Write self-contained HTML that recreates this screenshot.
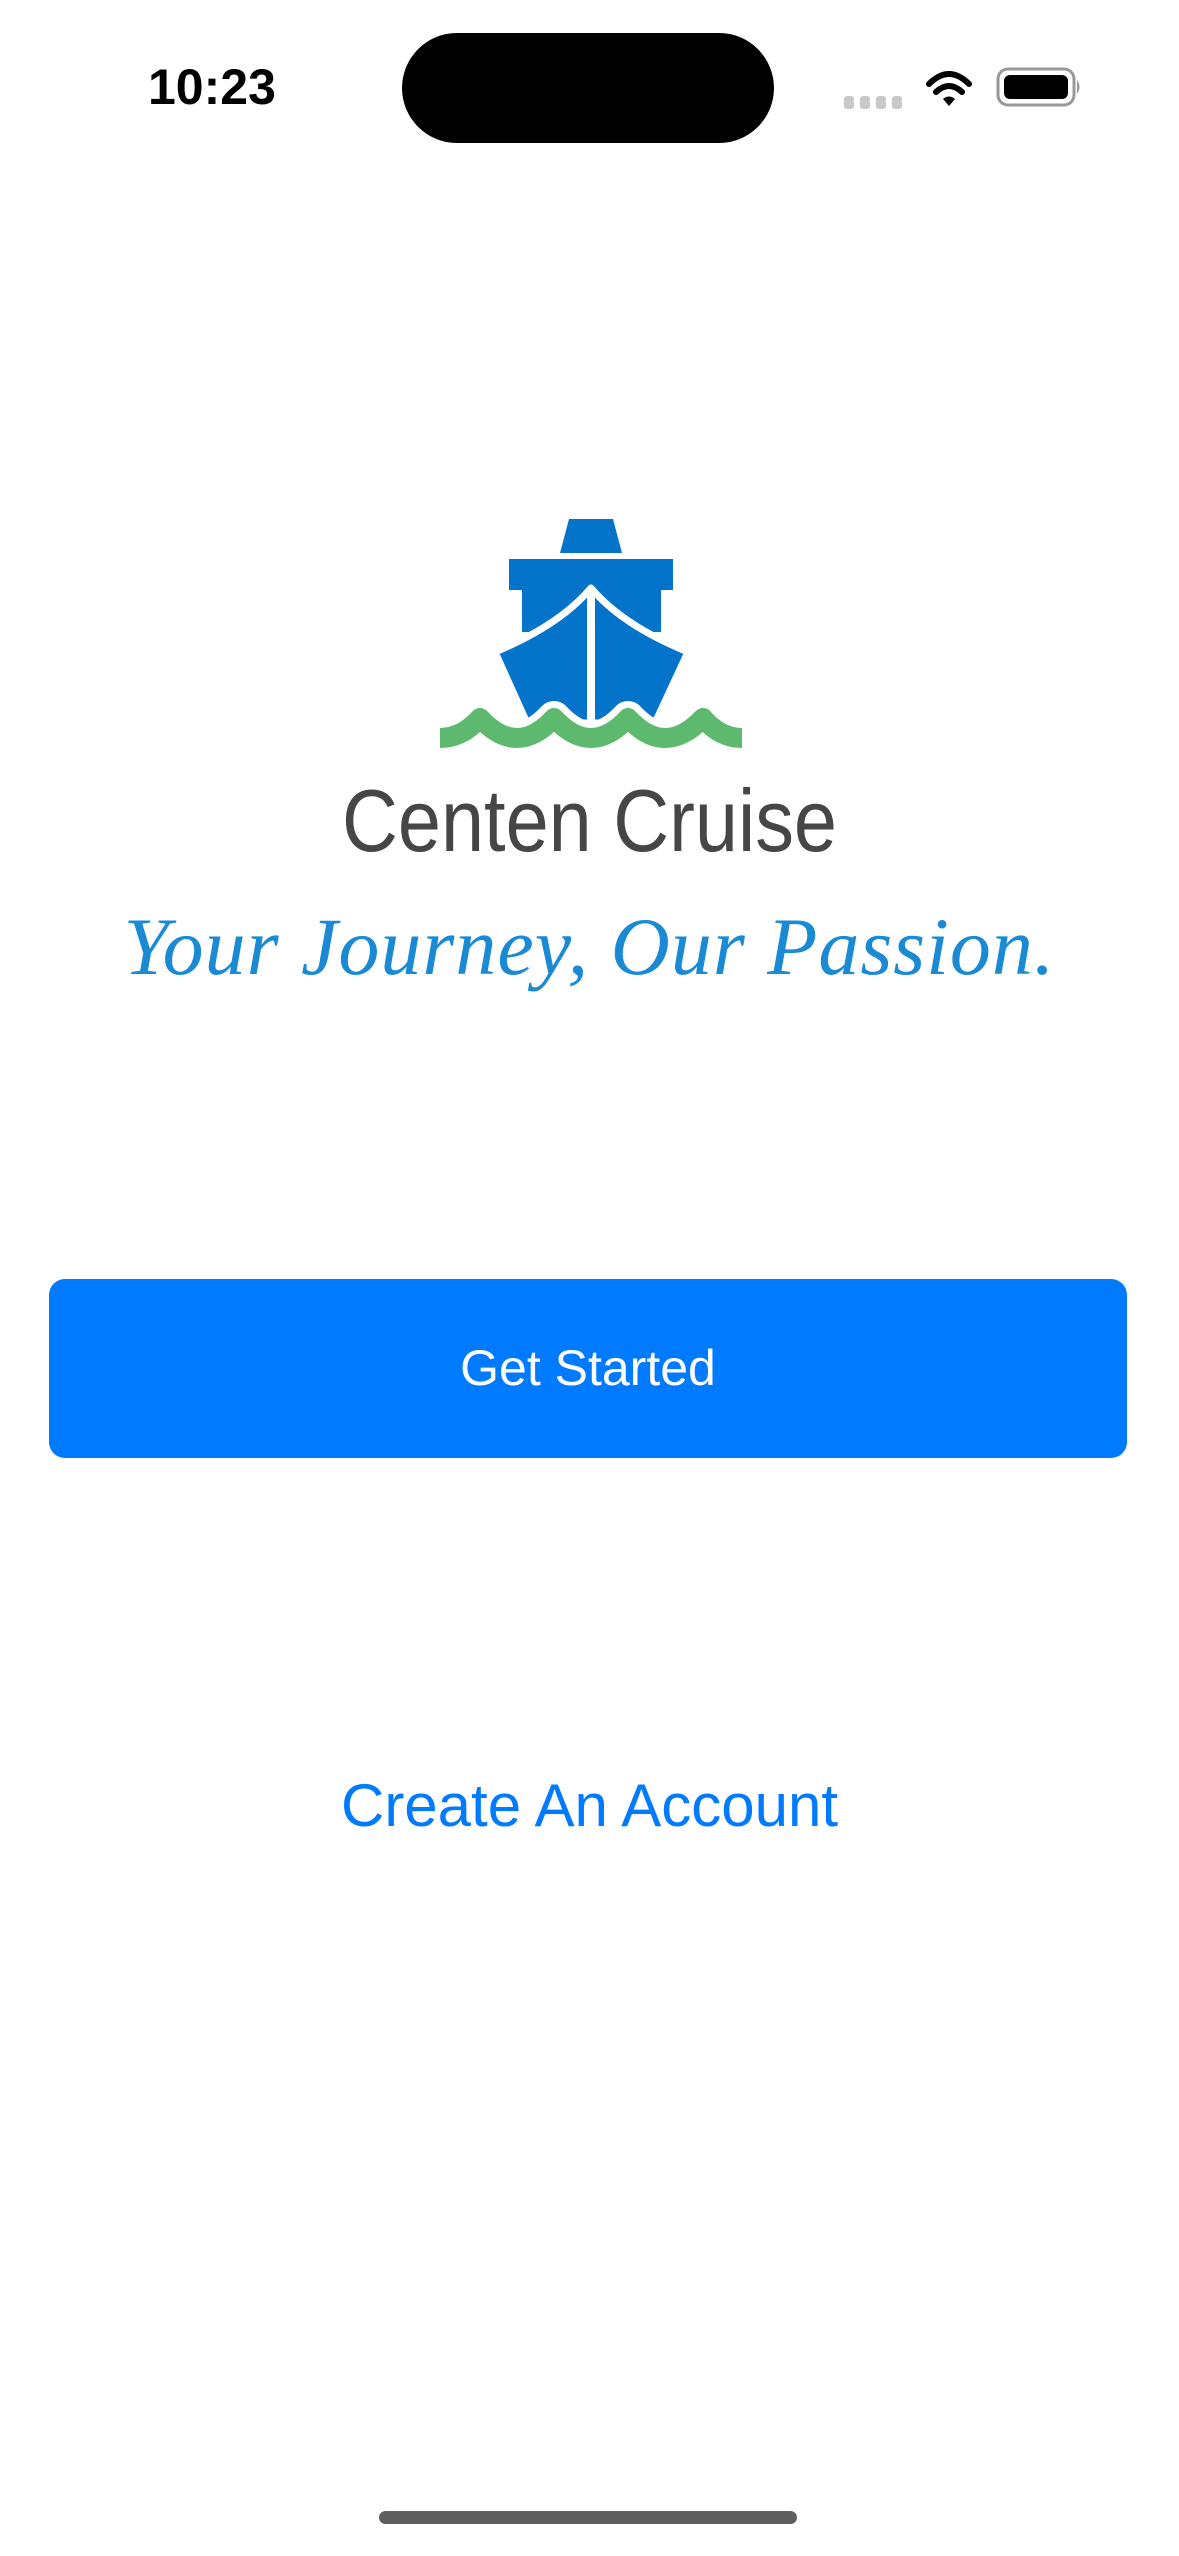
<!DOCTYPE html>
<html><head><meta charset="utf-8"><style>
html,body{margin:0;padding:0;background:#fff;}
body{width:1179px;height:2556px;position:relative;overflow:hidden;font-family:"Liberation Sans",sans-serif;}
.abs{position:absolute;}
</style></head><body>
<div class="abs" style="left:148px;top:58px;font-size:50px;font-weight:bold;color:#000;">10:23</div>
<div class="abs" style="left:402px;top:33px;width:372px;height:110px;background:#000;border-radius:55px;"></div>
<svg class="abs" style="left:0;top:0" width="1179" height="160">
 <g fill="#c8c8c8"><rect x="844" y="96" width="10" height="13" rx="3"/><rect x="860" y="96" width="10" height="13" rx="3"/><rect x="876" y="96" width="10" height="13" rx="3"/><rect x="892" y="96" width="10" height="13" rx="3"/></g>
 <g fill="none" stroke="#000" stroke-width="6" stroke-linecap="round">
  <path d="M929,84 Q949,64 969,84"/><path d="M936,92 Q949,80 962,92"/>
 </g>
 <path d="M943,99 L949,106 L955,99 Q949,94 943,99Z" fill="#000"/>
 <rect x="998" y="69" width="76" height="36" rx="10" fill="none" stroke="#999" stroke-width="3"/>
 <rect x="1004" y="75" width="64" height="24" rx="6" fill="#000"/>
 <path d="M1077,80 Q1082,87 1077,94Z" fill="#999"/>
</svg>
<svg class="abs" style="left:0;top:480" width="1179" height="300" viewBox="0 480 1179 300">
 <path d="M569,519 L613,519 L622,553 L560,553Z" fill="#0474ca"/>
 <path d="M509,559 L673,559 L673,590 L661,590 L661,632 L522,632 L522,590 L509,590Z" fill="#0474ca"/>
 <path d="M495,652 Q560,625 591,588 Q622,625 688,652 L655,723 L527,723Z" fill="#0474ca" stroke="#fff" stroke-width="7" stroke-linejoin="round"/>
 <line x1="591" y1="592" x2="591" y2="725" stroke="#fff" stroke-width="8"/>
 <path d="M440,738 Q462,738 480,718 Q517,758 554,718 Q591,758 628,718 Q665,758 703,718 Q720,738 742,738" fill="none" stroke="#fff" stroke-width="34" stroke-linejoin="round"/>
 <path d="M440,738 Q462,738 480,718 Q517,758 554,718 Q591,758 628,718 Q665,758 703,718 Q720,738 742,738" fill="none" stroke="#5cb96e" stroke-width="20" stroke-linejoin="round"/>
</svg>
<div class="abs" style="left:0;width:1179px;top:770px;text-align:center;font-size:88px;color:#464646;transform:scaleX(0.88);">Centen Cruise</div>
<div class="abs" style="left:0;width:1179px;top:900px;text-align:center;font-family:'Liberation Serif',serif;font-style:italic;font-size:82px;color:#1a8ad4;letter-spacing:1px;">Your Journey, Our Passion.</div>
<div class="abs" style="left:49px;top:1279px;width:1078px;height:179px;background:#007aff;border-radius:16px;color:#fff;font-size:50px;line-height:179px;text-align:center;">Get Started</div>
<div class="abs" style="left:0;width:1179px;top:1771px;text-align:center;font-size:60px;color:#007aff;">Create An Account</div>
<div class="abs" style="left:379px;top:2511px;width:418px;height:13px;background:#5f5f5f;border-radius:7px;"></div>
</body></html>
